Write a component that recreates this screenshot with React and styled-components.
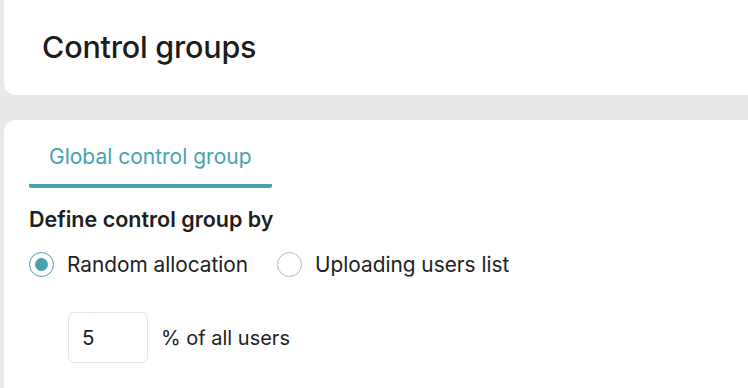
import React from "react"
import styled, { createGlobalStyle } from "styled-components"

const GlobalStyle = createGlobalStyle`
  body {
    margin: 0;
    background: #e9e9e9;
    font-family: "Inter", "Noto Sans", sans-serif;
    color: #1e1e1e;
  }
`

const App = () => {
  return (
    <Page>
      <GlobalStyle />
      <Header>
        <Title>Control groups</Title>
      </Header>
      <Panel>
        <Tabs>
          <Tab active>Global control group</Tab>
        </Tabs>
        <Label>Define control group by</Label>
        <RadioRow>
          <RadioOption>
            <Radio checked />
            Random allocation
          </RadioOption>
          <RadioOption>
            <Radio />
            Uploading users list
          </RadioOption>
        </RadioRow>
        <PercentRow>
          <NumberInput defaultValue="5" />
          <span>% of all users</span>
        </PercentRow>
      </Panel>
    </Page>
  )
}

export default App

const Page = styled.div`
  display: flex;
  flex-direction: column;
  row-gap: 25px;
  padding-left: 4px;
  height: 388px;
  overflow: hidden;
`

const Header = styled.div`
  background: #fff;
  height: 95px;
  border-radius: 0 0 0 12px;
  display: flex;
  align-items: center;
  padding-left: 38px;
  flex-shrink: 0;
`

const Title = styled.h1`
  margin: 0 0 2px;
  font-size: 30.5px;
  font-weight: 500;
  letter-spacing: -0.2px;
  color: #1c1c1c;
`

const Panel = styled.div`
  flex: 1;
  background: #fff;
  border-radius: 12px 0 0 0;
  padding: 0 0 0 25px;
`

const Tabs = styled.div`
  display: flex;
  padding-top: 25px;
`

const Tab = styled.div`
  padding: 0 20px 15px;
  font-size: 21px;
  line-height: 24px;
  color: ${(p) => (p.active ? "#48a2ae" : "#666")};
  border-bottom: 4px solid ${(p) => (p.active ? "#48a2ae" : "transparent")};
  border-radius: 2px;
`

const Label = styled.div`
  margin-top: 19px;
  font-size: 21.5px;
  line-height: 24px;
  font-weight: 600;
  color: #1e1e1e;
`

const RadioRow = styled.div`
  display: flex;
  align-items: center;
  column-gap: 29px;
  margin-top: 21px;
  line-height: 24px;
`

const RadioOption = styled.label`
  display: flex;
  align-items: center;
  column-gap: 13px;
  font-size: 20.8px;
  color: #222;
`

const Radio = styled.span`
  width: 25px;
  height: 25px;
  box-sizing: border-box;
  border-radius: 50%;
  border: 1.5px solid ${(p) => (p.checked ? "#48a2ae" : "#aab9d6")};
  display: flex;
  align-items: center;
  justify-content: center;

  &::after {
    content: "";
    width: 13px;
    height: 13px;
    border-radius: 50%;
    background: ${(p) => (p.checked ? "#48a2ae" : "transparent")};
  }
`

const PercentRow = styled.div`
  display: flex;
  align-items: center;
  column-gap: 13px;
  margin-top: 35px;
  padding-left: 39px;
  font-size: 20px;
  color: #222;
`

const NumberInput = styled.input`
  width: 80px;
  height: 51px;
  box-sizing: border-box;
  border: 1px solid #dfe3ec;
  border-radius: 6px;
  padding: 0 13px;
  font-family: inherit;
  font-size: 20.5px;
  color: #222;
  outline: none;
`
